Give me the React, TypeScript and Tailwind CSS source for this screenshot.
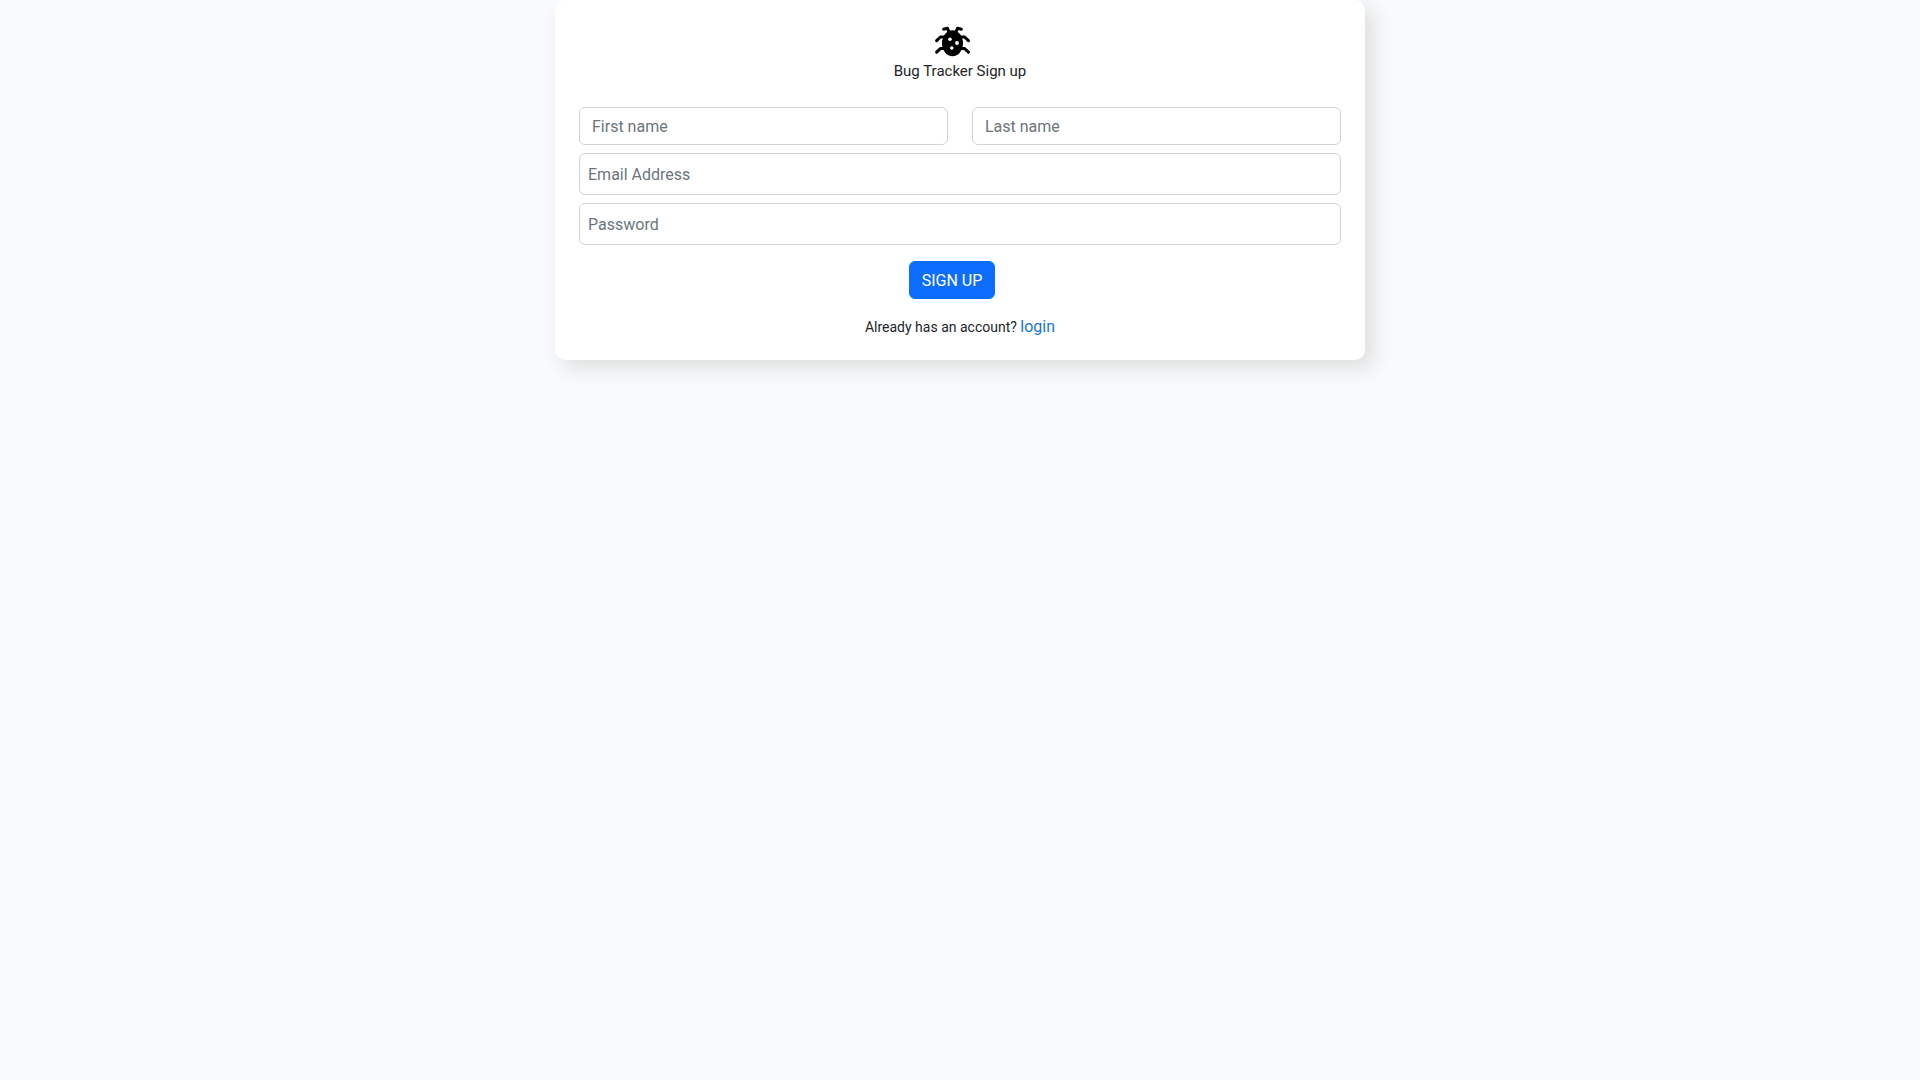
import { useState } from "react";
import type { FormEvent } from "react";

function BugLogo() {
  return (
    <svg viewBox="0 0 36 36" className="mr-4 h-9 w-9" aria-hidden="true">
      <ellipse cx="18.5" cy="19.2" rx="10.5" ry="13" />
      <g fill="none" stroke="#000" strokeWidth="3" strokeLinecap="round" strokeLinejoin="round">
        <path d="M15 8 13.4 4.2 9.6 5.2" />
        <path d="M22 8 23.6 4.2 27.4 5.2" />
        <path d="M10 13H6.4L2.6 16.6" />
        <path d="M27 13H30.6L34.4 16.6" />
        <path d="M10 24.6H6.4L2.6 28.2" />
        <path d="M27 24.6H30.6L34.4 28.2" />
      </g>
      <g fill="#fff">
        <circle cx="16" cy="15.3" r="1.8" />
        <circle cx="23" cy="19" r="1.9" />
        <circle cx="17.8" cy="24" r="1.8" />
      </g>
    </svg>
  );
}

export default function App() {
  const [form, setForm] = useState({ firstName: "", lastName: "", email: "", password: "" });

  function update(name: string, value: string) {
    setForm((prev) => ({ ...prev, [name]: value }));
  }

  function handleSubmit(e: FormEvent) {
    e.preventDefault();
  }

  return (
    <div className="min-h-screen bg-[#f8fafc] font-['Roboto',sans-serif] text-base text-[#212529]">
      <main className="mx-auto max-w-[810px] rounded-[10px] bg-white px-6 pt-6 pb-[21px] shadow-[8px_8px_20px_#dedede]">
        <form onSubmit={handleSubmit} className="flex flex-col items-center">
          <BugLogo />
          <h1 className="text-[15px] leading-[23px]">Bug Tracker Sign up</h1>

          <div className="mt-6 grid w-full grid-cols-2 gap-6">
            <input
              type="text"
              aria-label="First name"
              placeholder="First name"
              value={form.firstName}
              onChange={(e) => update("firstName", e.target.value)}
              className="w-full rounded-md border border-[#ced4da] bg-white px-3 pt-[7px] pb-[5px] leading-6 outline-none placeholder:text-[#6c757d] focus:border-[#86b7fe]"
            />
            <input
              type="text"
              aria-label="Last name"
              placeholder="Last name"
              value={form.lastName}
              onChange={(e) => update("lastName", e.target.value)}
              className="w-full rounded-md border border-[#ced4da] bg-white px-3 pt-[7px] pb-[5px] leading-6 outline-none placeholder:text-[#6c757d] focus:border-[#86b7fe]"
            />
          </div>
          <input
            type="email"
            aria-label="Email Address"
            placeholder="Email Address"
            value={form.email}
            onChange={(e) => update("email", e.target.value)}
            className="mt-2 w-full rounded-md border border-[#ced4da] bg-white px-2 pt-[9px] pb-[7px] leading-6 outline-none placeholder:text-[#6c757d] focus:border-[#86b7fe]"
          />
          <input
            type="password"
            aria-label="Password"
            placeholder="Password"
            value={form.password}
            onChange={(e) => update("password", e.target.value)}
            className="mt-2 w-full rounded-md border border-[#ced4da] bg-white px-2 pt-[9px] pb-[7px] leading-6 outline-none placeholder:text-[#6c757d] focus:border-[#86b7fe]"
          />

          <button
            type="submit"
            className="mt-4 mr-4 rounded-md border border-[#0d6efd] bg-[#0d6efd] px-3 pt-[7px] pb-[5px] leading-6 text-white hover:bg-[#0b5ed7]"
          >
            SIGN UP
          </button>

          <p className="mt-4 text-sm leading-6">
            Already has an account?{" "}
            <a href="/login" className="text-base leading-6 text-[#1976d2] hover:underline">
              login
            </a>
          </p>
        </form>
      </main>
    </div>
  );
}
